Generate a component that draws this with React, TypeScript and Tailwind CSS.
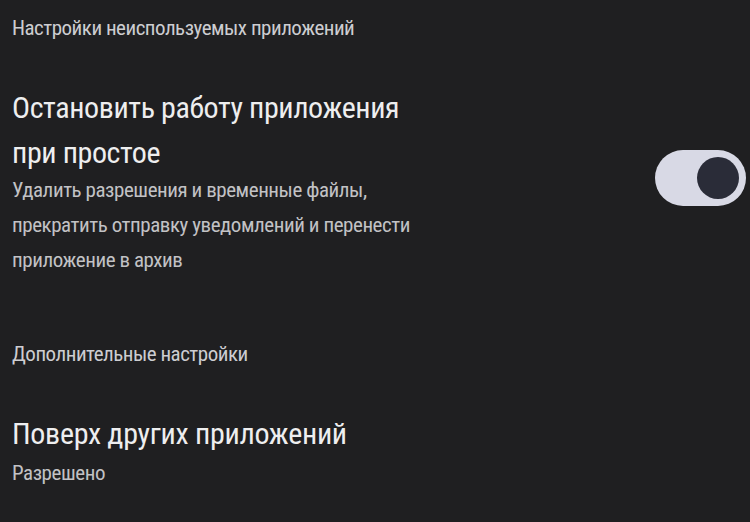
export default function App() {
  return (
    <div className="h-[522px] w-[750px] overflow-hidden bg-[#1f1f21] font-['Roboto','Noto_Sans',sans-serif] font-stretch-condensed">
      <div className="px-3 pt-[12px]">
        <p className="text-[21px] leading-[32px] tracking-[-0.5px] text-[#cdcdd1]">
          Настройки неиспользуемых приложений
        </p>
      </div>

      <div className="mt-[41px] flex items-start justify-between pl-3 pr-1">
        <div>
          <p className="text-[30px] leading-[45px] tracking-[-0.4px] text-[#eeeeef]">
            Остановить работу приложения
            <br />
            при простое
          </p>
          <p className="-mt-[2px] text-[21px] leading-[35px] tracking-[-0.45px] text-[#c2c2c5]">
            Удалить разрешения и временные файлы,
            <br />
            прекратить отправку уведомлений и перенести
            <br />
            приложение в архив
          </p>
        </div>
        <button className="mt-[65px] flex h-[56px] w-[91px] items-center justify-end rounded-full bg-[#d8d9e5] pr-[7px]">
          <span className="h-[42px] w-[42px] rounded-full bg-[#2a2c38]" />
        </button>
      </div>

      <div className="mt-[60px] px-3">
        <p className="text-[21px] leading-[32px] tracking-[-0.5px] text-[#cdcdd1]">Дополнительные настройки</p>
      </div>

      <div className="mt-[44px] px-3">
        <p className="text-[30px] leading-[40px] tracking-[-0.3px] text-[#eeeeef]">Поверх других приложений</p>
        <p className="mt-[4px] text-[21px] leading-[30px] tracking-[-0.45px] text-[#c2c2c5]">Разрешено</p>
      </div>
    </div>
  );
}
